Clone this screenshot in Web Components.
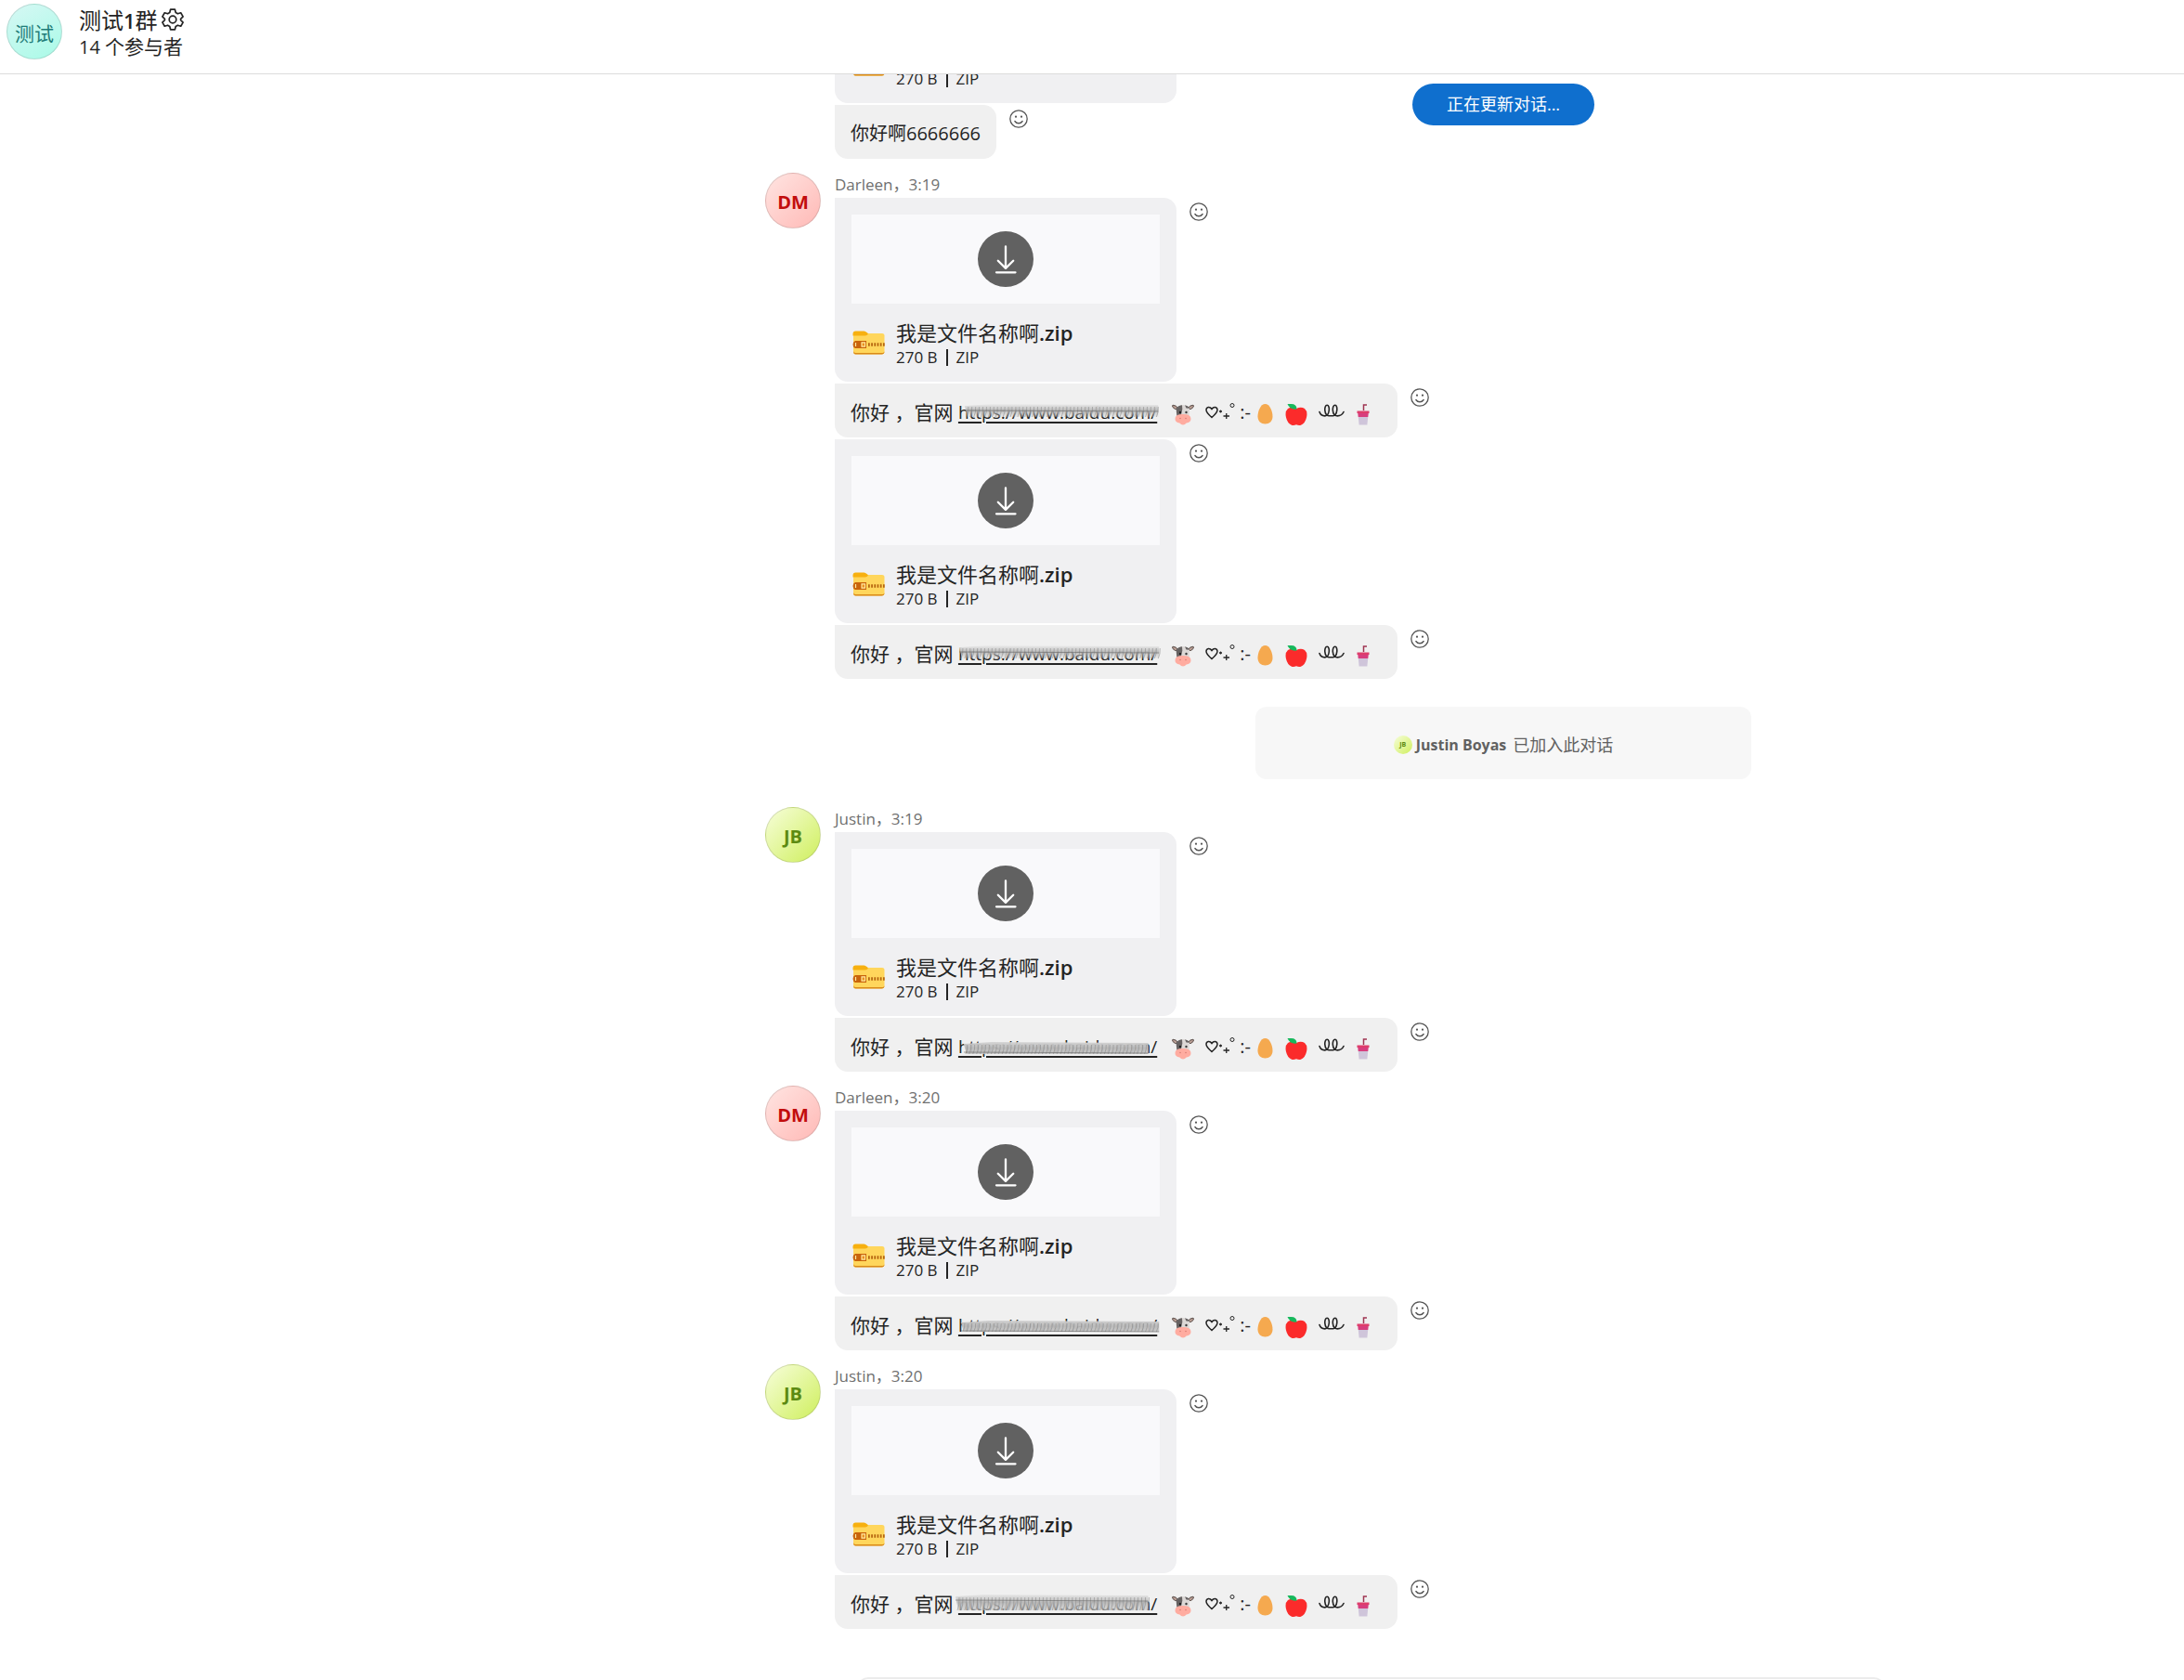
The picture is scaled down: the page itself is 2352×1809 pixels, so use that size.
<!DOCTYPE html>
<html lang="zh-CN">
<head>
<meta charset="utf-8">
<title>测试1群</title>
<style>
html,body{margin:0;height:100%}
body{background:#fff;color:#242424;font-family:"Open Sans","Noto Sans CJK SC",sans-serif;font-size:20px}
</style>
</head>
<body>
<chat-app></chat-app>
<script>
const define = (name, html, setup) => customElements.define(name, class extends HTMLElement {
  connectedCallback() {
    if (this.shadowRoot) return;
    const t = document.createElement('template');
    t.innerHTML = html;
    this.attachShadow({mode: 'open'}).append(t.content.cloneNode(true));
    if (setup) setup(this, this.shadowRoot);
  }
});

define('user-avatar', `<style>
:host{display:flex;flex:none;align-items:center;justify-content:center;box-sizing:border-box;width:60px;height:60px;padding-top:4px;border-radius:50%;font-size:20px;line-height:24px;font-weight:700;border:1px solid rgba(90,90,90,.18)}
:host([tone=red]){background:linear-gradient(135deg,#ffdedb 15%,#ffb9b6);color:#c20d0d}
:host([tone=lime]){background:linear-gradient(135deg,#f2fccb 12%,#cfef5e);color:#5c8a12}
:host([tone=teal]){background:linear-gradient(150deg,#d2f8f3 10%,#b0fae9 85%);color:#1f7d78;font-weight:400;font-size:21px}
:host([small]){width:20px;height:20px;padding-top:0;font-size:7px;line-height:8px;border:0}
</style><slot></slot>`);

define('smile-button', `<style>
:host{display:block;flex:none;height:20px}
button{display:block;border:0;background:none;padding:0;width:20px;height:20px}
svg{display:block}
</style><button aria-label="添加回应"><svg width="20" height="20" viewBox="0 0 20 20"><circle cx="10" cy="10" r="9.2" fill="none" stroke="#555" stroke-width="1.3"/><circle cx="7" cy="7.7" r="1.1" fill="#555"/><circle cx="13" cy="7.7" r="1.1" fill="#555"/><path d="M5.9 12.5c2 3 6.200 3 8.200 0" fill="none" stroke="#555" stroke-width="1.4" stroke-linecap="round"/></svg></button>`);

define('chat-row', `<style>
:host{display:flex;align-items:flex-start;gap:14px}
smile-button{margin-top:5px}
</style><slot></slot><smile-button></smile-button>`);

define('file-card', `<style>
:host{display:flex;flex-direction:column;box-sizing:border-box;width:368px;height:198px;padding:18px 18px 0;background:#f0f0f2;border-radius:0 14px 14px 14px}
.preview{height:96px;background:#f9f9fb;display:flex;align-items:center;justify-content:center}
button{border:0;padding:0;width:60px;height:60px;border-radius:50%;background:#616161}
svg{display:block}
.file{display:flex;align-items:flex-start;gap:12px;margin-top:18px}
.name{min-height:28px;font-size:22px;line-height:26px;font-weight:600;white-space:nowrap}
.name span{font-weight:400}
.meta{display:flex;align-items:center;gap:9px;font-size:17px;line-height:24px}
.meta i{width:2px;height:18px;background:#242424}
.icon{margin:11px 0 0 1px}
</style>
<div class="preview"><button aria-label="下载"><svg width="60" height="60" viewBox="0 0 60 60" fill="none" stroke="#fff" stroke-width="2.300" stroke-linecap="round" stroke-linejoin="round"><path d="M30 16.500v23M21.800 31.700l8.200 8.200 8.200-8.200M20 44.300h20.500"/></svg></button></div>
<div class="file">
<svg class="icon" width="35" height="26" viewBox="0 0 35 26"><path d="M1 3h31q2.500 0 2.500 2.500v17q0 3-3 3h-28q-2.500 0-2.500-3z" fill="#ffd65c"/><path d="M1 22.500q0 3 2.500 3h28q3 0 3-3v-.5q0 2-3 2h-28q-2.500 0-2.500-2z" fill="#d98a1a"/><path d="M.500 3.500q0-3 3-3h9q1.500 0 3 1.500l1 .8q.8.700-.3 1.700-1.200 1-3 1H.500z" fill="#f7b010"/><path d="M3 11h12v8H3q-2.500-1-2.500-4T3 11z" fill="#c9640b"/><path d="M3.500 13v4M10 12.800h3.500v4.400H10z" stroke="#ffe9a0" stroke-width="1.200" fill="#e98d1a"/><path d="M17 15h18" stroke="#b3620d" stroke-width="3.500" stroke-dasharray="1.700 1.500"/></svg>
<div><div class="name"><span>我是文件名称啊</span>.zip</div><div class="meta"><div>270 B</div><i></i><div>ZIP</div></div></div>
</div>`, (host, root) => {
  if (host.hasAttribute('untitled')) root.querySelector('.name').textContent = '';
});

define('text-bubble', `<style>
:host{display:flex;align-items:center;box-sizing:border-box;height:58px;padding:4px 17px 0;background:#f0f0f0;border-radius:0 14px 14px 14px;white-space:pre;font-size:20px;line-height:28px}
</style><slot></slot>`);

define('masked-link', `<style>
:host{display:block;position:relative;font-size:19px}
a{color:inherit;text-decoration:underline;text-decoration-thickness:2px;text-underline-offset:3px}
svg{position:absolute;left:0;top:4px;width:100%;height:20px;overflow:visible;pointer-events:none}
</style><a href="https://www.baidu.com/">https://www.baidu.com/</a>`, (host, root) => {
  const cfg = {
    a: {x0: 7, x1: 219, y0: 2, y1: 15, streak: 8, top: '#ececec', bottom: .15},
    b: {x0: 1, x1: 220, y0: 2, y1: 15, streak: 8, top: '#ececec', bottom: .15},
    c: {x0: 6, x1: 208, y0: 6, y1: 18, streak: 16, top: '#d4d4d4', bottom: .95},
    d: {x0: 3, x1: 220, y0: 6, y1: 17, streak: 16, top: '#cfcfcf', bottom: .95},
    e: {x0: -3, x1: 208, y0: 1, y1: 17, streak: 6, top: '#e6e6e6', bottom: .6}
  }[host.getAttribute('smear')];
  let zig = '';
  for (let x = cfg.x0 + 2; x < cfg.x1; x += 4) zig += `M${x} ${cfg.y1}q2.500-5 2-${cfg.y1 - cfg.y0 - 2}`;
  root.innerHTML += `<svg viewBox="0 0 218 20" preserveAspectRatio="none" aria-hidden="true">
  <defs><linearGradient id="g" x2="0" y2="1"><stop offset="0" stop-color="${cfg.top}" stop-opacity=".95"/><stop offset=".5" stop-color="#b8b8b8" stop-opacity=".95"/><stop offset="1" stop-color="#c8c8c8" stop-opacity="${cfg.bottom}"/></linearGradient></defs>
  <path d="M${cfg.x0} ${cfg.y0 + 1}L${cfg.x0 + 30} ${cfg.y0 - 1}L${cfg.x1} ${cfg.y0}V${cfg.y1}H${cfg.x0 + 3}z" fill="url(#g)"/>
  <path d="${zig}" fill="none" stroke="#808080" stroke-opacity=".5" stroke-width="1"/>
  <path d="M${cfg.x0} ${cfg.streak}L${cfg.x1} ${cfg.streak + 1}" stroke="#666" stroke-opacity=".6" stroke-width="1"/></svg>`;
});

define('emoji-line', `<style>
:host{display:flex;align-items:center;margin-left:16px}
svg{display:block;flex:none;margin-top:4px}
.cow,.egg,.apple{margin-right:12px}
.marks{margin-right:3px}
.face{width:19px}
.curl{margin-right:13px}
</style>
<svg class="cow" width="24" height="24" viewBox="0 0 24 24"><path d="M7 6.500Q5 2 1 2.200 0 2.500 1 4.500 3 7.500 7 6.500zM17 6.500Q19 2 23 2.200q1 .3 0 2.300-2 3-6 2z" fill="#b89c92" stroke="#5b504c" stroke-width="1"/><path d="M5 5.500Q8 2 12 2t7 3.500L18.500 15h-13z" fill="#dcd8d6"/><path d="M4.500 5.800Q8 2.200 11 2.200l.3 4.300-1.300 6-2 2.500H5.500z" fill="#666262"/><path d="M19.500 5.800Q17 2.500 14 2.200l1.500 3.300z" fill="#666262"/><circle cx="9" cy="10" r="1.200" fill="#1d1d1d"/><circle cx="15.500" cy="10" r="1.200" fill="#3b3b3b"/><path d="M12 12q8.500 0 8.500 5 0 3.800-4.800 4.600-1.700 1.900-3.700 1.900t-3.700-1.900Q3.500 20.800 3.500 17q0-5 8.500-5z" fill="#ffaca0"/><circle cx="9" cy="16.500" r=".8" fill="#d97c72"/><circle cx="15" cy="16.500" r=".8" fill="#d97c72"/></svg>
<svg class="marks" width="34" height="24" viewBox="0 0 34 24" fill="none" stroke="#242424" stroke-width="1.500" role="img" aria-label="♡‧₊˚"><path d="M7 15.500C3 12 1 10 1 7.500 1 4 5 3.500 7 6.500 9 3.500 13 4 13 7.500 13 10 11 12 7 15.500z"/><circle cx="16.500" cy="9" r="1" fill="#242424" stroke-width="1"/><path d="M19.500 14h6.500M22.750 11v6" stroke-width="1.300"/><circle cx="29" cy="2.500" r="2" stroke-width="1"/></svg>
<span class="face">:-</span>
<svg class="egg" width="18" height="24" viewBox="0 0 18 24"><path d="M8.500 1c5 0 8 8 8 13.500 0 5-3.500 8-8 8s-8-3-8-8C.500 9 3.500 1 8.500 1z" fill="#f5a94f"/></svg>
<svg class="apple" width="24" height="24" viewBox="0 0 24 24"><path d="M12 6Q17 3.500 21 6q3.500 3 2 9.500-1.500 6.500-6 8.200-2.500.6-5-.5-2.500 1.100-5 .5-4.500-1.700-6-8.200Q-.500 9 3 6q4-2.500 9 0z" fill="#fb2b2b"/><path d="M2.500 1h4q6 0 6 5.500Q5 7.500 2.500 1z" fill="#17b85c"/></svg>
<svg class="curl" width="28" height="24" viewBox="0 0 28 24" fill="none" stroke="#242424" stroke-width="1.600" stroke-linecap="round"><path d="M1 9.500c1 3.200 4 4.500 6.500 4.300C12 13 12.500 2.300 9.200 2.300 5.500 2.300 6 13.500 11 13.800h4.500c5-.5 5.500-11.500 2.300-11.500-3.800 0-3.300 11.200 1.700 11.500 3 .2 6-1.100 7.500-4.300"/></svg>
<svg width="14" height="24" viewBox="0 0 14 24"><path d="M7.500 8V2h3.500" fill="none" stroke="#9f3552" stroke-width="1.500"/><path d="M.500 8.500h13v2.500H.500z" fill="#de3d6b"/><path d="M1.300 11h11.400l-.4 4H1.700z" fill="#d73e7d"/><path d="M1.800 15h10.400l-.8 8.500H2.600z" fill="#cfc5da"/></svg>`);

define('message-group', `<style>
:host{display:flex;align-items:flex-start;gap:15px}
.col{display:flex;flex-direction:column;gap:2px;min-width:0}
.name{font-size:17px;line-height:26px;color:#707070;margin-bottom:-1px;white-space:nowrap}
.gutter{width:60px}
</style>`, (h, r) => {
  const who = h.getAttribute('who'), time = h.getAttribute('time');
  const tone = h.getAttribute('tone');
  r.innerHTML += (who ? `<user-avatar tone="${tone}">${h.getAttribute('initials')}</user-avatar>` : '<div class="gutter"></div>') +
    `<div class="col">${who ? `<div class="name">${who}，${time}</div>` : ''}<slot></slot></div>`;
});

define('system-note', `<style>
:host{display:flex;justify-content:center;margin:15px 13px 15px 75px}
.box{display:flex;align-items:center;justify-content:center;gap:4px;box-sizing:border-box;width:534px;height:78px;padding-top:3px;border-radius:12px;background:#f7f7f7;color:#616161;font-size:17px;line-height:24px}
b{font-size:16px}
.box span{margin-left:3px;font-size:18px}
</style><div class="box"><user-avatar small tone="lime">JB</user-avatar><b>Justin Boyas</b><span>已加入此对话</span></div>`);

define('chat-header', `<style>
:host{display:flex;align-items:flex-start;box-sizing:border-box;height:80px;padding:4px 7px;gap:18px;border-bottom:1px solid #dcdcdc;background:#fff}
.titles{padding-top:2px}
h1{margin:0;display:flex;align-items:center;gap:4px;font-size:24px;line-height:32px;font-weight:400}
p{margin:0;font-size:20px;line-height:24px}
p span{font-size:21px}
button{border:0;background:none;padding:0;width:24px;height:24px;margin-bottom:2px}
svg{display:block}
b{font-weight:600;font-size:22px}
</style>
<user-avatar tone="teal">测试</user-avatar>
<div class="titles"><h1><div>测试<b>1</b>群</div><button aria-label="设置"><svg width="24" height="24" viewBox="0 0 24 24" fill="none" stroke="#242424" stroke-width="1.700" stroke-linejoin="round"><path d="M9.600 1.200h4.800l.8 3.300 2.200 1.300 3.300-1 2.400 4.100-2.500 2.400v1.400l2.500 2.400-2.400 4.100-3.300-1-2.200 1.300-.8 3.300H9.600l-.8-3.300-2.200-1.300-3.300 1-2.400-4.100 2.500-2.400v-1.400L.900 8.900l2.400-4.100 3.300 1 2.200-1.300z"/><circle cx="12" cy="12" r="3.800"/></svg></button></h1><p>14 <span>个参与者</span></p></div>`);

define('link-message', `<style>
:host{display:flex;align-items:center;box-sizing:border-box;height:58px;padding:4px 30px 0 17px;background:#f0f0f0;border-radius:0 14px 14px 14px;white-space:pre;font-size:20px;line-height:28px}
.lead{font-size:21px}
</style>`, (h, r) => {
  r.innerHTML += `<span class="lead">你好 ，官网 </span><masked-link smear="${h.getAttribute('smear')}"></masked-link><emoji-line></emoji-line>`;
});

define('chat-app', `<style>
:host{display:grid;grid-template-rows:auto minmax(0,1fr) auto;height:100vh;overflow:hidden}
main{display:flex;flex-direction:column;justify-content:flex-end;gap:15px;overflow:hidden;padding:0 0 52px 824px;position:relative}
.toast{position:absolute;top:10px;left:899px;right:13px;display:flex;justify-content:center}
.toast span{background:#0f6fce;color:#fff;border-radius:23px;padding:0 37px;font-size:18px;line-height:45px}
footer{height:3px;overflow:hidden;padding:0 322px 0 923px}
footer div{height:60px;border:2px solid #ececec;border-radius:12px}
</style>
<chat-header></chat-header>
<main>
<message-group><chat-row><file-card untitled></file-card></chat-row><chat-row><text-bubble>你好啊6666666</text-bubble></chat-row></message-group>
<message-group who="Darleen" time="3:19" initials="DM" tone="red"><chat-row><file-card></file-card></chat-row><chat-row><link-message smear="a"></link-message></chat-row><chat-row><file-card></file-card></chat-row><chat-row><link-message smear="b"></link-message></chat-row></message-group>
<system-note></system-note>
<message-group who="Justin" time="3:19" initials="JB" tone="lime"><chat-row><file-card></file-card></chat-row><chat-row><link-message smear="c"></link-message></chat-row></message-group>
<message-group who="Darleen" time="3:20" initials="DM" tone="red"><chat-row><file-card></file-card></chat-row><chat-row><link-message smear="d"></link-message></chat-row></message-group>
<message-group who="Justin" time="3:20" initials="JB" tone="lime"><chat-row><file-card></file-card></chat-row><chat-row><link-message smear="e"></link-message></chat-row></message-group>
<div class="toast"><span role="status">正在更新对话...</span></div>
</main>
<footer><div></div></footer>`);
</script>
</body>
</html>
